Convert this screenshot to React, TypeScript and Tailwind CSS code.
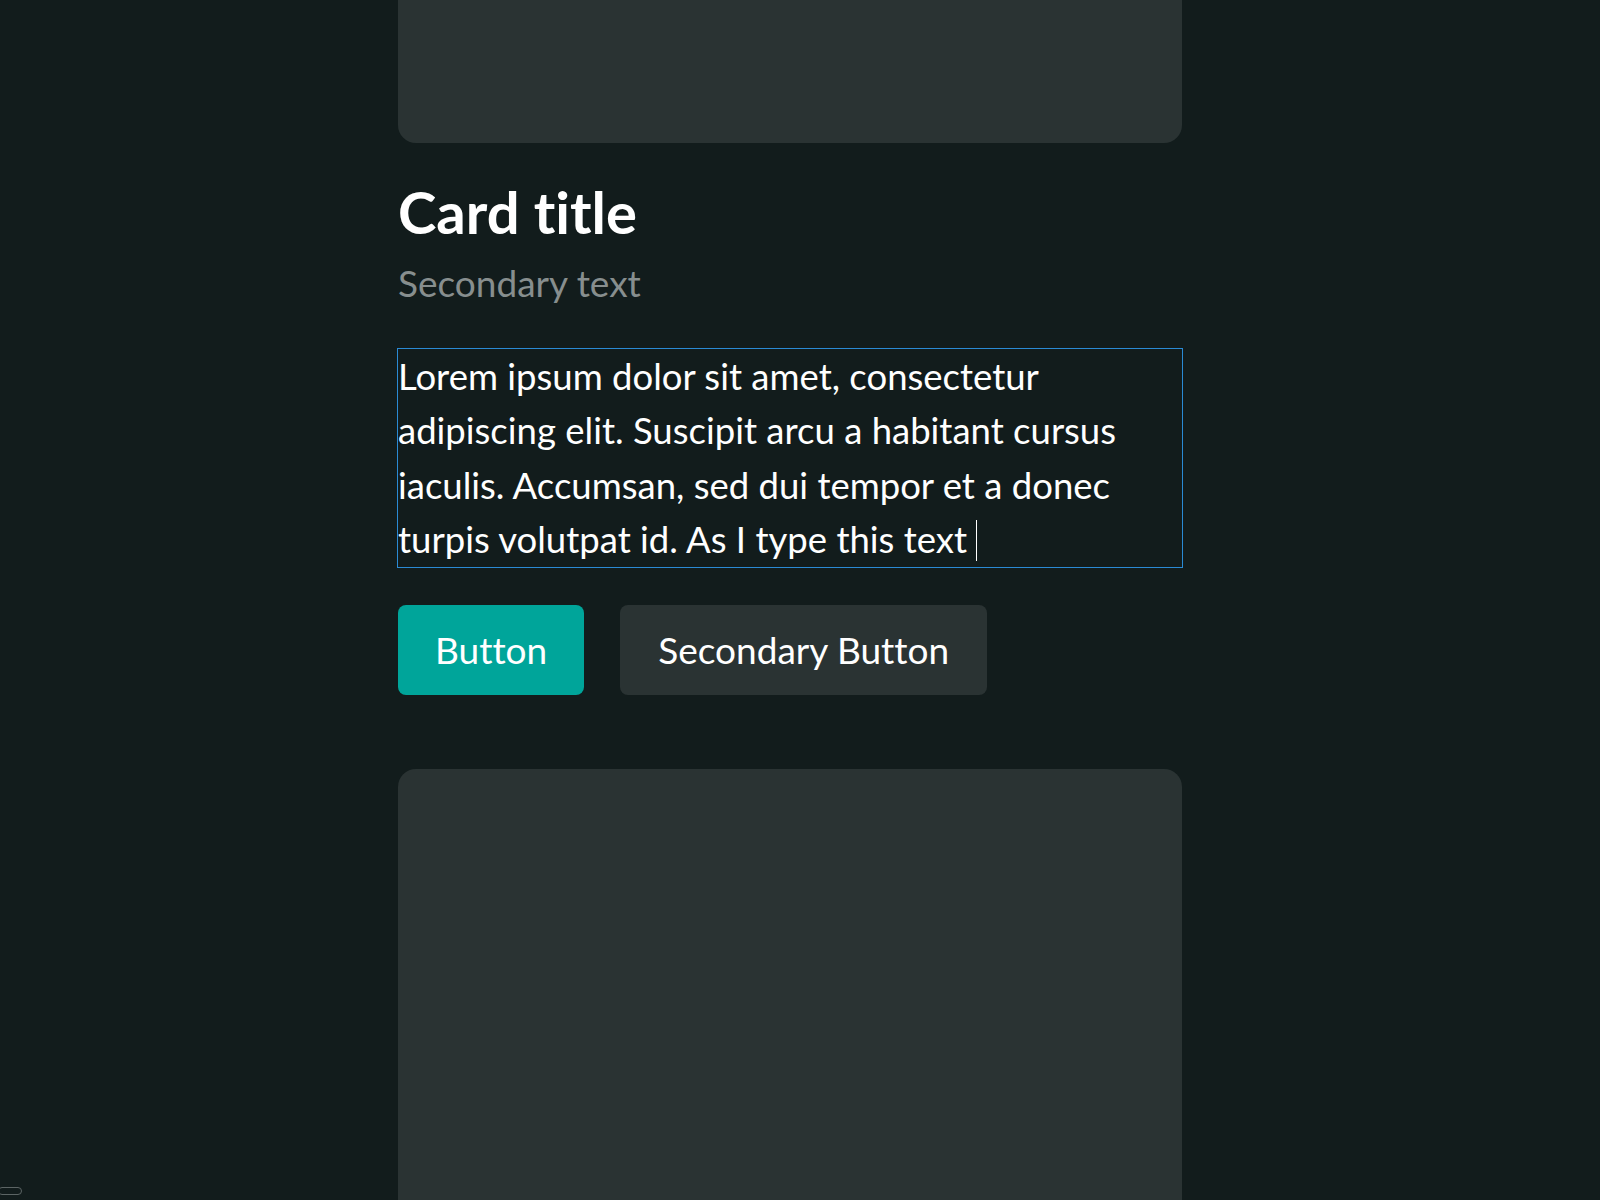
export default function App() {
  return (
    <div
      className="relative min-h-[1200px] overflow-hidden bg-[#121c1c] text-white [font-variant-ligatures:none]"
      style={{ fontFamily: "Lato, 'Liberation Sans', sans-serif" }}
    >
      <div className="ml-[398px] flex w-[784px] flex-col">
        {/* media placeholder, scrolled partly out of view */}
        <div className="h-[143px] rounded-b-[18px] bg-[#2a3333]" />

        <h1 className="mt-[34px] text-[58px] font-bold leading-[1.2]">Card title</h1>
        <p className="mt-[14px] text-[37px] leading-[1.2] text-[#878e8e]">Secondary text</p>

        <div className="-mx-px mt-[43px] h-[220px] border border-[#2a8ad4] text-[36.5px] leading-[54.5px]">
          Lorem ipsum dolor sit amet, consectetur adipiscing elit. Suscipit arcu a habitant
          cursus iaculis. Accumsan, sed dui tempor et a donec turpis volutpat id. As I type this
          text <span className="inline-block h-[41px] w-px translate-y-[8px] bg-white" />
        </div>

        <div className="mt-[37px] flex gap-[36px]">
          <button className="h-[90px] rounded-[8px] bg-[#00a59a] px-[37px] text-[37px] text-white">
            Button
          </button>
          <button className="h-[90px] rounded-[8px] bg-[#2a3333] px-[38px] text-[37px] text-white">
            Secondary Button
          </button>
        </div>

        <div className="mt-[74px] h-[500px] rounded-[18px] bg-[#2a3333]" />
      </div>

      <div className="absolute left-[-2px] top-[1187px] h-[8px] w-[24px] rounded-full border border-[#5c6464]" />
    </div>
  );
}
